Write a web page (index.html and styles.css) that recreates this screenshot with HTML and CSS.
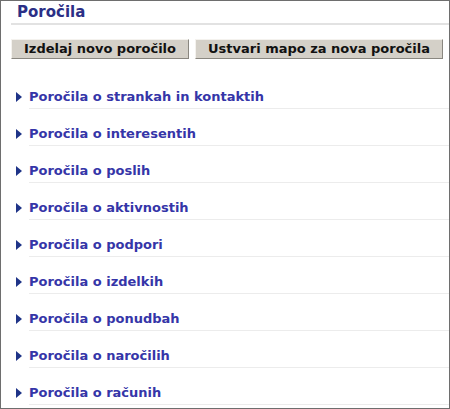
FILE: index.html
```html
<!DOCTYPE html>
<html lang="sl">
<head>
    <meta charset="UTF-8">
    <title>Poročila</title>
    <link rel="stylesheet" href="styles.css">
</head>
<body>
    <div class="okvir">
        <h2 class="naslov">Poročila</h2>

        <div class="gumbi">
            <button>Izdelaj novo poročilo</button>
            <button>Ustvari mapo za nova poročila</button>
        </div>

        <ul class="seznam">
            <li><span class="puscica"></span><a href="#">Poročila o strankah in kontaktih</a></li>
            <li><span class="puscica"></span><a href="#">Poročila o interesentih</a></li>
            <li><span class="puscica"></span><a href="#">Poročila o poslih</a></li>
            <li><span class="puscica"></span><a href="#">Poročila o aktivnostih</a></li>
            <li><span class="puscica"></span><a href="#">Poročila o podpori</a></li>
            <li><span class="puscica"></span><a href="#">Poročila o izdelkih</a></li>
            <li><span class="puscica"></span><a href="#">Poročila o ponudbah</a></li>
            <li><span class="puscica"></span><a href="#">Poročila o naročilih</a></li>
            <li><span class="puscica"></span><a href="#">Poročila o računih</a></li>
        </ul>
    </div>
</body>
</html>
```

FILE: styles.css
```css
html, body {
    margin: 0;
    padding: 0;
    background-color: #fff;
}
body {
    font-family: "DejaVu Sans", Verdana, sans-serif;
}
.okvir {
    box-sizing: border-box;
    width: 450px;
    height: 409px;
    border: 1px solid #6e6e6e;
    padding-left: 10px;
    overflow: hidden;
}
.naslov {
    margin: 0;
    padding: 3px 0 3px 6px;
    font-size: 15px;
    line-height: 16px;
    color: #2b2f86;
    border-bottom: 2px solid #e2e2e2;
}
.gumbi {
    display: flex;
    gap: 6px;
    margin-top: 14px;
}
button {
    font-family: "DejaVu Sans", Verdana, sans-serif;
    font-size: 13px;
    font-weight: bold;
    color: #111;
    background-color: #d4d0c8;
    border: 1px solid;
    border-color: #f4f2ee #8a8780 #8a8780 #f4f2ee;
    padding: 2px 12px 2px;
    line-height: 14px;
}
.seznam {
    list-style: none;
    margin: 13px 0 0;
    padding: 0;
}
.seznam li {
    display: flex;
    align-items: flex-end;
    padding-top: 17px;
    margin-left: 5px;
}
.puscica {
    width: 0;
    height: 0;
    border-top: 5.5px solid transparent;
    border-bottom: 5.5px solid transparent;
    border-left: 6px solid #1f3488;
    margin: 0 7px 7px 0;
}
.seznam a {
    flex: 1;
    font-size: 13px;
    font-weight: bold;
    line-height: 15px;
    color: #3535a8;
    text-decoration: none;
    padding-bottom: 4px;
    border-bottom: 1px solid #ececec;
}
```
